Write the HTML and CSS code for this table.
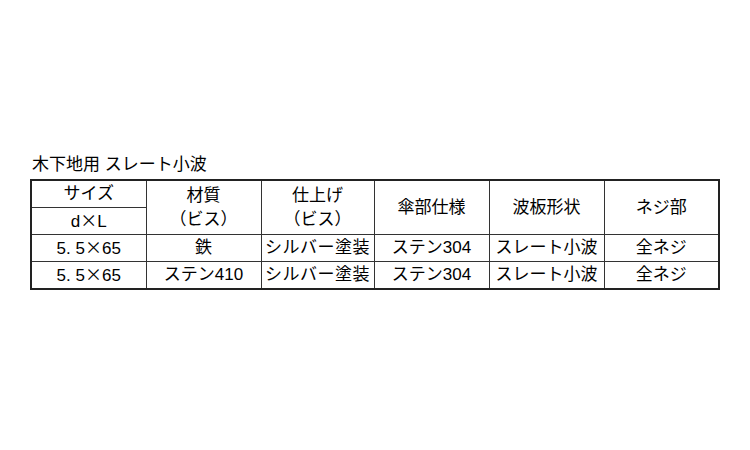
FILE: index.html
```html
<!DOCTYPE html>
<html lang="ja">
<head>
<meta charset="utf-8">
<link rel="stylesheet" href="styles.css">
</head>
<body>
<div class="wrap">
  <div class="title">木下地用 スレート小波</div>
  <table class="spec">
    <colgroup>
      <col class="c1"><col class="c2"><col class="c3"><col class="c4"><col class="c5"><col class="c6">
    </colgroup>
    <tr>
      <td class="h">サイズ</td>
      <td class="h" rowspan="2">材質<br>（ビス）</td>
      <td class="h" rowspan="2">仕上げ<br>（ビス）</td>
      <td class="h" rowspan="2">傘部仕様</td>
      <td class="h" rowspan="2">波板形状</td>
      <td class="h" rowspan="2">ネジ部</td>
    </tr>
    <tr>
      <td class="h">d<span class="x">×</span>L</td>
    </tr>
    <tr>
      <td>5. 5<span class="x">×</span>65</td>
      <td>鉄</td>
      <td class="wide">シルバー塗装</td>
      <td>ステン304</td>
      <td>スレート小波</td>
      <td>全ネジ</td>
    </tr>
    <tr>
      <td>5. 5<span class="x">×</span>65</td>
      <td>ステン410</td>
      <td class="wide">シルバー塗装</td>
      <td>ステン304</td>
      <td>スレート小波</td>
      <td>全ネジ</td>
    </tr>
  </table>
</div>
</body>
</html>
```
FILE: styles.css
```css
html, body {
  margin: 0;
  padding: 0;
  background: #ffffff;
}
body {
  font-family: "Liberation Sans", "Noto Sans CJK JP", sans-serif;
  color: #000000;
}
.wrap {
  padding: 153px 0 0 30px;
}
.title {
  font-size: 17px;
  line-height: 24px;
  height: 26px;
  padding-left: 2px;
}
.spec {
  border-collapse: collapse;
  border: 2px solid #222222;
  table-layout: fixed;
  width: 688px;
}
.c1 { width: 115px; }
.c2 { width: 115px; }
.c3 { width: 113px; }
.c4 { width: 115px; }
.c5 { width: 115px; }
.c6 { width: 115px; }
.spec td {
  border: 1px solid #333333;
  height: 26px;
  padding: 0;
  text-align: center;
  vertical-align: middle;
  font-size: 17px;
  line-height: 24px;
  white-space: nowrap;
}
.x {
  font-family: "Noto Sans CJK JP", sans-serif;
}
.wide {
  letter-spacing: 0.5px;
}
```
